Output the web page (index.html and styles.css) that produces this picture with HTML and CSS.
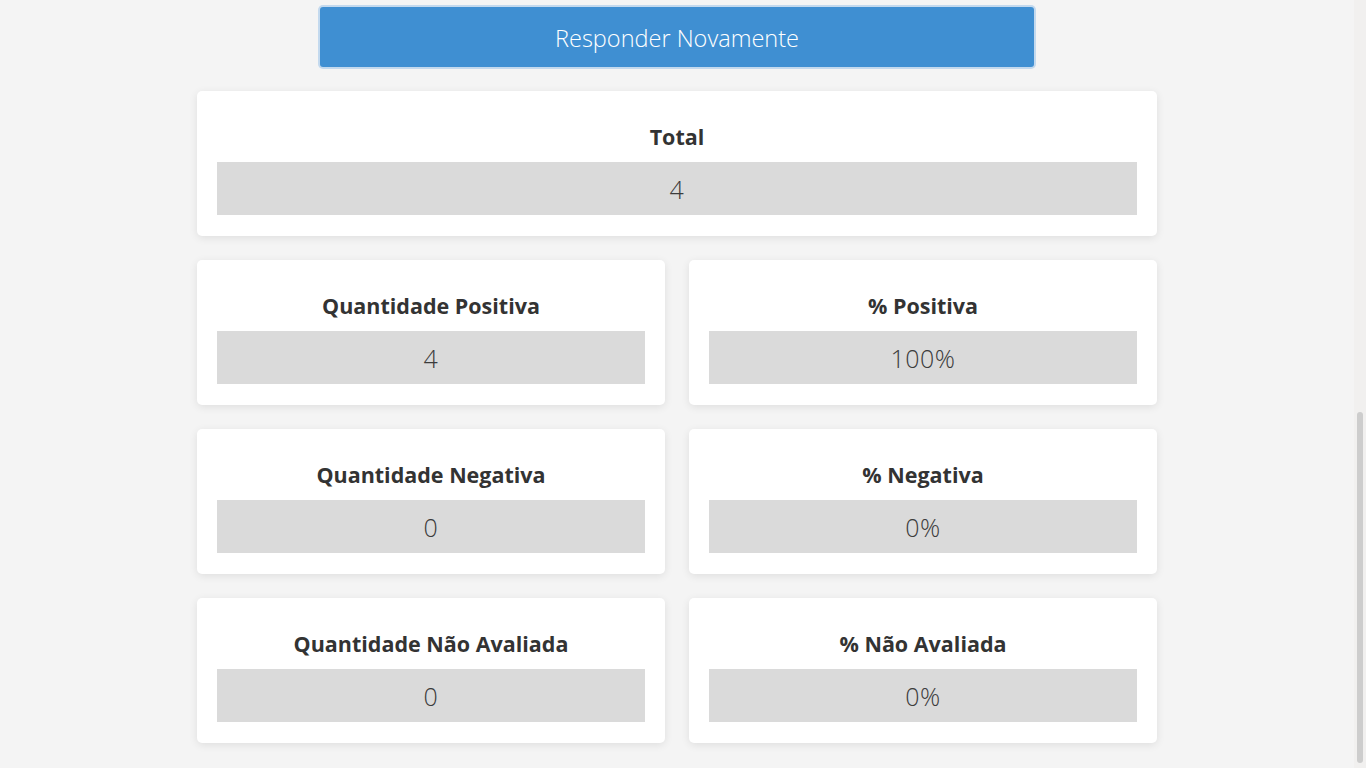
FILE: index.html
```html
<!DOCTYPE html>
<html lang="pt">
<head>
<meta charset="utf-8">
<title>Resultado</title>
<link rel="stylesheet" href="styles.css">
</head>
<body>
<div class="page">
  <div class="actions">
    <button class="btn-again">Responder Novamente</button>
  </div>
  <div class="grid">
    <div class="card card-full">
      <div class="card-title">Total</div>
      <div class="card-value">4</div>
    </div>
    <div class="card">
      <div class="card-title">Quantidade Positiva</div>
      <div class="card-value">4</div>
    </div>
    <div class="card">
      <div class="card-title">% Positiva</div>
      <div class="card-value">100%</div>
    </div>
    <div class="card">
      <div class="card-title">Quantidade Negativa</div>
      <div class="card-value">0</div>
    </div>
    <div class="card">
      <div class="card-title">% Negativa</div>
      <div class="card-value">0%</div>
    </div>
    <div class="card">
      <div class="card-title">Quantidade Não Avaliada</div>
      <div class="card-value">0</div>
    </div>
    <div class="card">
      <div class="card-title">% Não Avaliada</div>
      <div class="card-value">0%</div>
    </div>
  </div>
</div>
<div class="scrollbar"><div class="scrollbar-thumb"></div></div>
</body>
</html>
```
FILE: styles.css
```css
html, body {
  margin: 0;
  padding: 0;
  background: #f4f4f4;
  font-family: "Open Sans", "Noto Sans", sans-serif;
  overflow: hidden;
}
.page {
  width: 1354px;
  height: 768px;
  display: flex;
  flex-direction: column;
  align-items: center;
}
.actions {
  padding-top: 7px;
  display: flex;
  justify-content: center;
}
.btn-again {
  width: 714px;
  height: 60px;
  background: #3f8fd2;
  color: #ffffff;
  border: none;
  border-radius: 3px;
  box-shadow: 0 0 0 2px #c3d9ee;
  font-family: inherit;
  font-weight: 300;
  font-size: 23.5px;
  padding: 2px 0 0;
  cursor: pointer;
}
.grid {
  margin-top: 24px;
  width: 960px;
  display: grid;
  grid-template-columns: 1fr 1fr;
  gap: 24px;
}
.card {
  background: #ffffff;
  border-radius: 5px;
  box-shadow: 0 2px 8px rgba(0, 0, 0, 0.09);
  padding: 20px;
  height: 145px;
  box-sizing: border-box;
}
.card-full {
  grid-column: 1 / 3;
}
.card-title {
  height: 51px;
  display: flex;
  align-items: center;
  justify-content: center;
  box-sizing: border-box;
  font-weight: 700;
  font-size: 21.5px;
  color: #333333;
}
.card-value {
  height: 53px;
  background: #dadada;
  display: flex;
  align-items: center;
  justify-content: center;
  font-weight: 300;
  font-size: 25px;
  letter-spacing: 0.5px;
  color: #3c3c3c;
}
.scrollbar {
  position: fixed;
  top: 0;
  right: 0;
  width: 12px;
  height: 768px;
  background: #f1f0ef;
}
.scrollbar-thumb {
  position: absolute;
  left: 3px;
  width: 6px;
  top: 412px;
  height: 351px;
  border-radius: 3px;
  background: #cdcdcd;
}
```
